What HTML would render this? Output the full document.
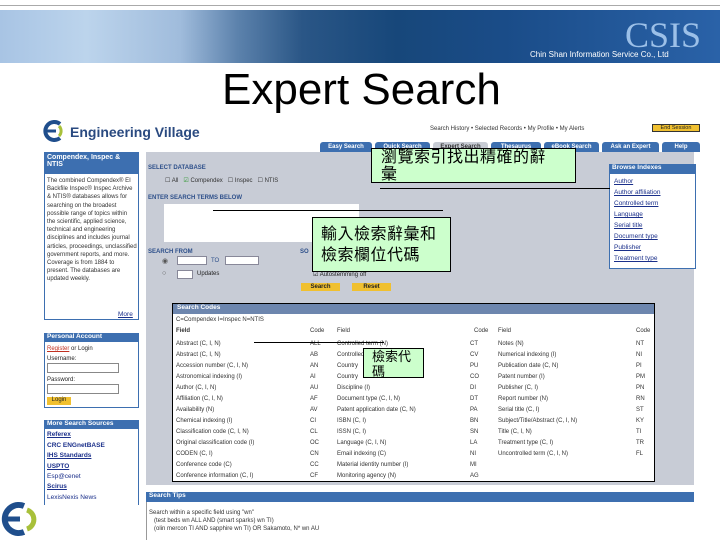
<!DOCTYPE html>
<html><head><meta charset="utf-8"><style>
*{margin:0;padding:0;box-sizing:border-box}
body{width:720px;height:540px;overflow:hidden;background:#fff;position:relative;font-family:"Liberation Sans",Arial,sans-serif;font-size:7px;color:#222}
.a{position:absolute}
.banner{left:0;top:10px;width:720px;height:53px;background:linear-gradient(90deg,#a8c4e4 0%,#bcd4ec 12%,#a0bcdc 25%,#5c82ac 33%,#2a5686 42%,#17477a 55%,#1a4c88 70%,#2a62a8 100%)}
.tab{position:absolute;top:142px;height:10px;background:#3d6fb0;color:#fff;font-size:6px;font-weight:bold;text-align:center;line-height:10px;border-radius:3px 3px 0 0}
.lnk{color:#1a2f8a;text-decoration:underline;font-size:6.5px;position:absolute}
.callout{position:absolute;background:#ccffcc;border:1px solid #000;font-family:"Liberation Sans","Noto Sans CJK TC",sans-serif;color:#000;font-size:16px;line-height:19px;padding:1px 8px}
.hl{position:absolute;height:1px;background:#000}
.row{position:absolute;font-size:6px;color:#333;white-space:nowrap}
.lbl{position:absolute;font-size:6px;font-weight:bold;color:#2d4f8a}
</style></head><body>
<div class="a" style="left:0;top:5px;width:720px;height:1px;background:#aaa"></div>
<div class="a banner"></div>
<div class="a" style="left:625px;top:17px;font-family:'Liberation Serif',serif;font-size:36px;color:#9cc0e8;line-height:36px">CSIS</div>
<div class="a" style="left:530px;top:50px;font-size:8px;color:#fff">Chin Shan Information Service Co., Ltd</div>
<div class="a" style="left:222px;top:66px;font-size:44px;color:#000;line-height:48px">Expert Search</div>

<svg class="a" style="left:42px;top:120px" width="26" height="22" viewBox="0 0 26 22"><path d="M18 4 A9 9 0 1 0 18 18" fill="none" stroke="#1f4e8c" stroke-width="4"/><path d="M5 11 H14" stroke="#1f4e8c" stroke-width="3"/><path d="M17 6 A7 7 0 0 1 17 16" fill="none" stroke="#a8c03a" stroke-width="3"/></svg>
<div class="a" style="left:70px;top:124px;font-size:14px;font-weight:bold;color:#2a4a80">Engineering Village</div>

<div class="a" style="left:430px;top:126px;font-size:6px;color:#333">Search History • Selected Records • My Profile • My Alerts</div>
<div class="a" style="left:652px;top:124px;width:48px;height:8px;background:#f0c030;border:1px solid #333;font-size:5.5px;text-align:center;line-height:7px">End Session</div>

<div class="tab" style="left:320px;width:52px">Easy Search</div>
<div class="tab" style="left:375px;width:55px">Quick Search</div>
<div class="tab" style="left:433px;width:55px;background:#c8ccd4;color:#333">Expert Search</div>
<div class="tab" style="left:491px;width:50px">Thesaurus</div>
<div class="tab" style="left:544px;width:55px">eBook Search</div>
<div class="tab" style="left:602px;width:57px">Ask an Expert</div>
<div class="tab" style="left:662px;width:38px">Help</div>

<div class="a" style="left:44px;top:152px;width:95px;height:168px;border:1px solid #3d6fb0;background:#fff"></div>
<div class="a" style="left:44px;top:152px;width:95px;height:22px;background:#3d6fb0;color:#fff;font-weight:bold;font-size:7px;padding:2px 3px">Compendex, Inspec &amp; NTIS</div>
<div class="a" style="left:47px;top:177px;width:90px;font-size:6px;line-height:8.2px;color:#333">The combined Compendex® EI Backfile Inspec® Inspec Archive &amp; NTIS® databases allows for searching on the broadest possible range of topics within the scientific, applied science, technical and engineering disciplines and includes journal articles, proceedings, unclassified government reports, and more. Coverage is from 1884 to present. The databases are updated weekly.</div>
<div class="lnk" style="left:118px;top:311px">More</div>

<div class="a" style="left:44px;top:333px;width:95px;height:75px;border:1px solid #3d6fb0"></div>
<div class="a" style="left:44px;top:333px;width:95px;height:9px;background:#3d6fb0;color:#fff;font-weight:bold;font-size:6.5px;padding-left:3px">Personal Account</div>
<div class="a" style="left:47px;top:346px;font-size:6px"><span style="color:#c03020;text-decoration:underline">Register</span> or Login</div>
<div class="a" style="left:47px;top:356px;font-size:6px">Username:</div>
<div class="a" style="left:47px;top:363px;width:72px;height:10px;border:1px solid #888"></div>
<div class="a" style="left:47px;top:377px;font-size:6px">Password:</div>
<div class="a" style="left:47px;top:384px;width:72px;height:10px;border:1px solid #888"></div>
<div class="a" style="left:47px;top:397px;width:24px;height:8px;background:#f0c030;font-size:6px;text-align:center">Login</div>

<div class="a" style="left:44px;top:420px;width:95px;height:85px;border-left:1px solid #3d6fb0;border-right:1px solid #3d6fb0"></div>
<div class="a" style="left:44px;top:420px;width:95px;height:9px;background:#3d6fb0;color:#fff;font-weight:bold;font-size:6.5px;padding-left:3px">More Search Sources</div>
<div class="lnk" style="left:47px;top:431px;font-weight:bold">Referex</div>
<div class="lnk" style="left:47px;top:442px;font-weight:bold;text-decoration:none">CRC ENGnetBASE</div>
<div class="lnk" style="left:47px;top:452px;font-weight:bold">IHS Standards</div>
<div class="lnk" style="left:47px;top:463px;font-weight:bold">USPTO</div>
<div class="lnk" style="left:47px;top:473px;text-decoration:none">Esp@cenet</div>
<div class="lnk" style="left:47px;top:483px;font-weight:bold">Scirus</div>
<div class="lnk" style="left:47px;top:494px;text-decoration:none">LexisNexis News</div>

<div class="a" style="left:146px;top:152px;width:548px;height:333px;background:#c8ccd6"></div>
<div class="lbl" style="left:148px;top:165px">SELECT DATABASE</div>
<div class="a" style="left:165px;top:177px;font-size:6px;color:#333">☐ All &nbsp; <span style="color:#393">☑</span> Compendex &nbsp; ☐ Inspec &nbsp; ☐ NTIS</div>
<div class="lbl" style="left:148px;top:195px">ENTER SEARCH TERMS BELOW</div>
<div class="a" style="left:164px;top:204px;width:195px;height:38px;background:#fff"></div>
<div class="lbl" style="left:148px;top:249px">SEARCH FROM</div>
<div class="a" style="left:162px;top:257px;font-size:7px;color:#555">◉</div>
<div class="a" style="left:177px;top:256px;width:30px;height:9px;background:#fff;border:1px solid #889"></div>
<div class="a" style="left:211px;top:258px;font-size:6px;color:#2d4f8a">TO</div>
<div class="a" style="left:225px;top:256px;width:34px;height:9px;background:#fff;border:1px solid #889"></div>
<div class="a" style="left:162px;top:270px;font-size:7px;color:#555">○</div>
<div class="a" style="left:177px;top:270px;width:16px;height:9px;background:#fff;border:1px solid #889"></div>
<div class="a" style="left:197px;top:271px;font-size:6px">Updates</div>
<div class="lbl" style="left:300px;top:249px">SO</div>
<div class="a" style="left:313px;top:271px;font-size:6px">☑ Autostemming off</div>
<div class="a" style="left:301px;top:283px;width:39px;height:8px;background:#f0c030;font-size:6px;font-weight:bold;text-align:center;line-height:8px">Search</div>
<div class="a" style="left:352px;top:283px;width:39px;height:8px;background:#f0c030;font-size:6px;font-weight:bold;text-align:center;line-height:8px">Reset</div>

<div class="a" style="left:609px;top:164px;width:87px;height:105px;background:#fff;border:1px solid #3d6fb0"></div>
<div class="a" style="left:609px;top:164px;width:87px;height:10px;background:#3d6fb0;color:#fff;font-weight:bold;font-size:6.5px;padding-left:3px">Browse Indexes</div>
<div class="lnk" style="left:614px;top:178px">Author</div>
<div class="lnk" style="left:614px;top:189px">Author affiliation</div>
<div class="lnk" style="left:614px;top:200px">Controlled term</div>
<div class="lnk" style="left:614px;top:211px">Language</div>
<div class="lnk" style="left:614px;top:222px">Serial title</div>
<div class="lnk" style="left:614px;top:233px">Document type</div>
<div class="lnk" style="left:614px;top:244px">Publisher</div>
<div class="lnk" style="left:614px;top:255px">Treatment type</div>

<div class="a" style="left:172px;top:303px;width:483px;height:179px;background:#fff;border:1px solid #000"></div>
<div class="a" style="left:173px;top:304px;width:481px;height:10px;background:#6d86ae;color:#fff;font-size:6.5px;font-weight:bold;padding-left:4px">Search Codes</div>
<div class="row" style="left:176px;top:317px">C=Compendex I=Inspec N=NTIS</div>
<div class="row" style="left:176px;top:328px;font-weight:bold">Field</div><div class="row" style="left:310px;top:328px">Code</div><div class="row" style="left:337px;top:328px">Field</div><div class="row" style="left:474px;top:328px">Code</div><div class="row" style="left:498px;top:328px">Field</div><div class="row" style="left:636px;top:328px">Code</div>
<div class="row" style="left:176px;top:339px;line-height:11px">Abstract (C, I, N)<br>Abstract (C, I, N)<br>Accession number (C, I, N)<br>Astronomical indexing (I)<br>Author (C, I, N)<br>Affiliation (C, I, N)<br>Availability (N)<br>Chemical indexing (I)<br>Classification code (C, I, N)<br>Original classification code (I)<br>CODEN (C, I)<br>Conference code (C)<br>Conference information (C, I)</div>
<div class="row" style="left:310px;top:339px;line-height:11px">ALL<br>AB<br>AN<br>AI<br>AU<br>AF<br>AV<br>CI<br>CL<br>OC<br>CN<br>CC<br>CF</div>
<div class="row" style="left:337px;top:339px;line-height:11px">Controlled term (N)<br>Controlled term<br>Country<br>Country<br>Discipline (I)<br>Document type (C, I, N)<br>Patent application date (C, N)<br>ISBN (C, I)<br>ISSN (C, I)<br>Language (C, I, N)<br>Email indexing (C)<br>Material identity number (I)<br>Monitoring agency (N)</div>
<div class="row" style="left:470px;top:339px;line-height:11px">CT<br>CV<br>PU<br>CO<br>DI<br>DT<br>PA<br>BN<br>SN<br>LA<br>NI<br>MI<br>AG</div>
<div class="row" style="left:498px;top:339px;line-height:11px">Notes (N)<br>Numerical indexing (I)<br>Publication date (C, N)<br>Patent number (I)<br>Publisher (C, I)<br>Report number (N)<br>Serial title (C, I)<br>Subject/Title/Abstract (C, I, N)<br>Title (C, I, N)<br>Treatment type (C, I)<br>Uncontrolled term (C, I, N)</div>
<div class="row" style="left:636px;top:339px;line-height:11px">NT<br>NI<br>PI<br>PM<br>PN<br>RN<br>ST<br>KY<br>TI<br>TR<br>FL</div>

<div class="a" style="left:146px;top:492px;width:548px;height:10px;background:#3d6fb0;color:#fff;font-weight:bold;font-size:6.5px;padding-left:3px">Search Tips</div>
<div class="a" style="left:146px;top:502px;width:1px;height:38px;background:#999"></div>
<div class="a" style="left:149px;top:509px;font-size:6px;line-height:8px;color:#333">Search within a specific field using "wn"<br>&nbsp;&nbsp;&nbsp;(test beds wn ALL AND (smart sparks) wn TI)<br>&nbsp;&nbsp;&nbsp;(olin mercon TI AND sapphire wn TI) OR Sakamoto, N* wn AU</div>

<svg class="a" style="left:0;top:498px" width="40" height="42" viewBox="0 0 40 42"><path d="M24 8 A14 14 0 1 0 24 34" fill="none" stroke="#1f4e8c" stroke-width="6"/><path d="M4 21 H20" stroke="#1f4e8c" stroke-width="5"/><path d="M27 12 A10 10 0 0 1 27 31" fill="none" stroke="#a8c03a" stroke-width="5"/></svg>

<div class="hl" style="left:380px;top:188px;width:230px"></div>
<div class="callout" style="left:371px;top:148px;width:205px;height:35px;padding:0 9px;line-height:17px;letter-spacing:0.5px">瀏覽索引找出精確的辭<br>彙</div>
<div class="hl" style="left:213px;top:210px;width:230px"></div>
<div class="callout" style="left:312px;top:217px;width:139px;height:55px;padding-top:6px;line-height:21px;letter-spacing:0.5px">輸入檢索辭彙和<br>檢索欄位代碼</div>
<div class="hl" style="left:254px;top:342px;width:130px"></div>
<div class="callout" style="left:363px;top:348px;width:61px;height:30px;padding:0 8px;font-size:13px;line-height:15px">檢索代碼</div>
</body></html>
